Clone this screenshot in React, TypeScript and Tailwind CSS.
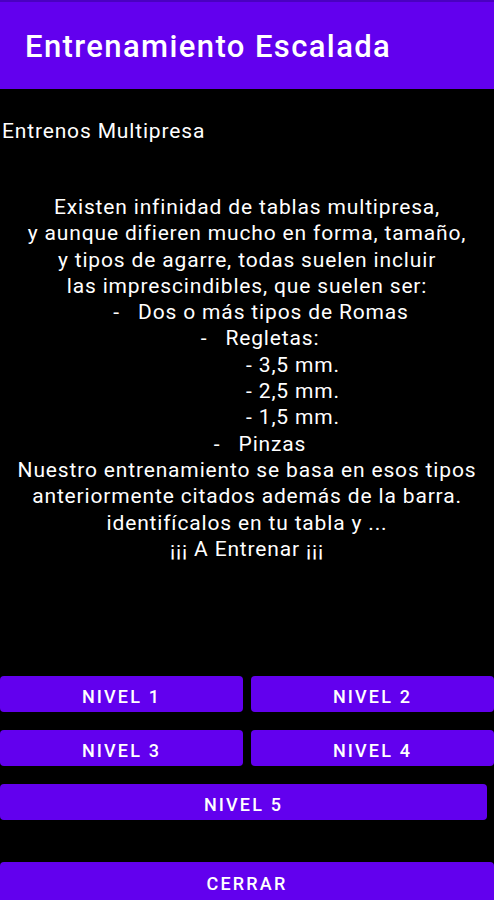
import React from 'react';

type Line = { text: string; shift?: string };

const lines: Line[] = [
  { text: 'Existen infinidad de tablas multipresa,' },
  { text: 'y aunque difieren mucho en forma, tamaño,' },
  { text: 'y tipos de agarre, todas suelen incluir' },
  { text: 'las imprescindibles, que suelen ser:' },
  { text: '-   Dos o más tipos de Romas', shift: 'pl-[28px]' },
  { text: '-   Regletas:', shift: 'pl-[26px]' },
  { text: '- 3,5 mm.', shift: 'pl-[92px]' },
  { text: '- 2,5 mm.', shift: 'pl-[92px]' },
  { text: '- 1,5 mm.', shift: 'pl-[92px]' },
  { text: '-   Pinzas', shift: 'pl-[26px]' },
  { text: 'Nuestro entrenamiento se basa en esos tipos' },
  { text: 'anteriormente citados además de la barra.' },
  { text: 'identifícalos en tu tabla y ...' },
  { text: '¡¡¡ A Entrenar ¡¡¡' },
];

function LevelButton({ label, className = '' }: { label: string; className?: string }) {
  return (
    <button className={`h-[36px] pt-[4px] rounded-[4px] bg-[#6200ee] text-white text-[18px] font-medium tracking-[0.12em] uppercase ${className}`}>
      {label}
    </button>
  );
}

export default function App() {
  return (
    <div className="w-[494px] h-[900px] bg-black text-white flex flex-col overflow-hidden" style={{ fontFamily: 'Roboto, "Noto Sans", sans-serif' }}>
      <header className="h-[89px] bg-[#6200ee] border-t-2 border-[#4a00c0] flex items-center px-[25px] pt-[4px]">
        <h1 className="text-[31px] font-medium tracking-[0.045em]">Entrenamiento Escalada</h1>
      </header>

      <div className="px-[2px] pt-[29px] text-[21px] leading-[26px] tracking-[0.04em]">Entrenos Multipresa</div>

      <div className="mt-[50px] flex flex-col text-[21px] leading-[26.3px] tracking-[0.04em]">
        {lines.map((l, i) => (
          <div key={i} className={`text-center whitespace-pre ${l.shift ?? ''}`}>
            {l.text}
          </div>
        ))}
      </div>

      <div className="mt-auto flex flex-col">
        <div className="grid grid-cols-2 gap-x-[8px]">
          <LevelButton label="Nivel 1" />
          <LevelButton label="Nivel 2" />
        </div>
        <div className="grid grid-cols-2 gap-x-[8px] mt-[18px]">
          <LevelButton label="Nivel 3" />
          <LevelButton label="Nivel 4" />
        </div>
        <LevelButton label="Nivel 5" className="mt-[18px] w-[487px]" />
        <LevelButton label="Cerrar" className="mt-[42px] w-full h-[38px] rounded-b-none" />
      </div>
    </div>
  );
}
